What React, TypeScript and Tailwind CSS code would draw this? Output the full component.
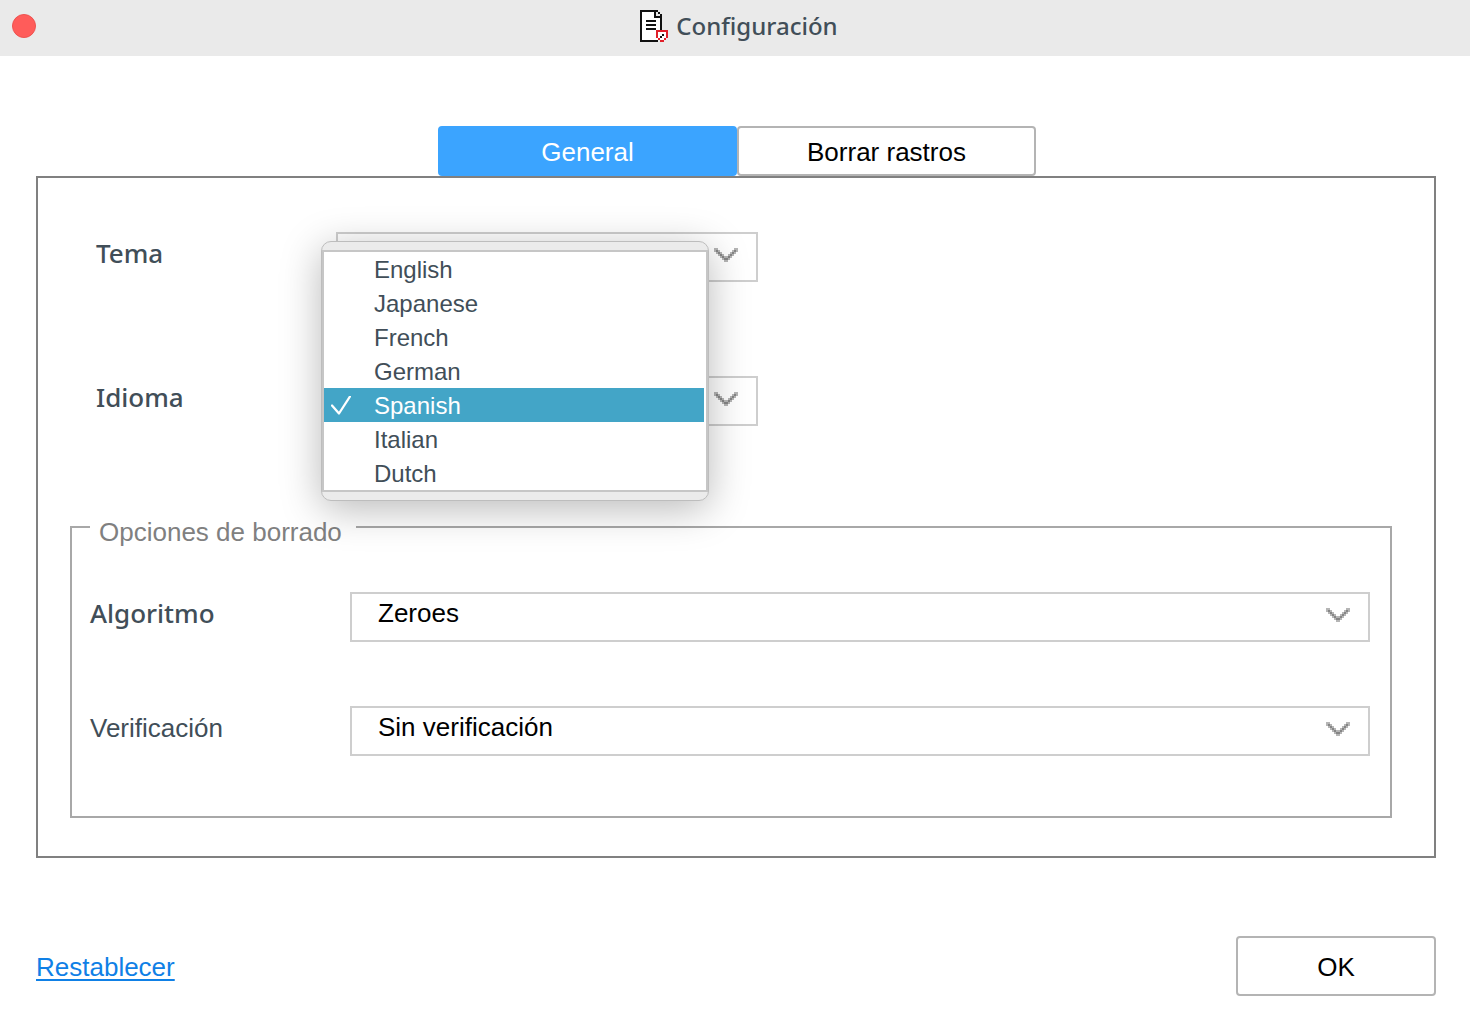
import React, { useState } from "react";
import clsx from "clsx";

const languages = [
  "English",
  "Japanese",
  "French",
  "German",
  "Spanish",
  "Italian",
  "Dutch",
];

const DocumentIcon = () => (
  <svg
    width="28"
    height="32"
    viewBox="0 0 14 16"
    shapeRendering="crispEdges"
    aria-hidden="true"
  >
    <path fill="#fff" d="M1 1h7v3h2v11H1z" />
    <path
      fill="#111"
      d="M0 0h9v1H0zM0 1h1v15H0zM1 15h8v1H1zM7 1h1v3H7zM9 1h1v1H9zM10 2h1v8h-1zM8 3h2v1H8zM3 5h5v1H3zM3 7h5v1H3zM3 9h5v1H3z"
    />
    <path fill="#fff" d="M9 11h4v3h-1v1h-2v-1H9z" />
    <path
      fill="#e0202a"
      d="M8 10h6v1H8zM8 11h1v3H8zM13 11h1v3h-1zM9 14h1v1H9zM12 14h1v1h-1zM10 15h2v1h-2z"
    />
    <path fill="#111" d="M11 12h1v1h-1zM10 13h1v1h-1z" />
  </svg>
);

const Chevron = () => (
  <svg
    className="pointer-events-none absolute right-5 top-4"
    width="24"
    height="14"
    viewBox="0 0 12 7"
    shapeRendering="crispEdges"
    aria-hidden="true"
  >
    <path
      fill="#b5b5b5"
      d="M0 0h2v1H0zM10 0h2v1h-2zM0 1h3v1H0zM9 1h3v1H9zM1 2h3v1H1zM8 2h3v1H8zM2 3h3v1H2zM7 3h3v1H7zM3 4h6v1H3zM4 5h4v1H4zM5 6h2v1H5z"
    />
    <path
      fill="#858585"
      d="M1 1h1v1H1zM10 1h1v1h-1zM2 2h1v1H2zM9 2h1v1H9zM3 3h1v1H3zM8 3h1v1H8zM4 4h1v1H4zM7 4h1v1H7zM5 5h2v1H5z"
    />
  </svg>
);

interface FieldProps {
  id: string;
  label: string;
  options: string[];
  value?: string;
  wide?: boolean;
  plainLabel?: boolean;
  children?: React.ReactNode;
}

const Field = ({
  id,
  label,
  options,
  value,
  wide,
  plainLabel,
  children,
}: FieldProps) => (
  <div className="flex items-center">
    <label
      htmlFor={id}
      className={clsx(
        "shrink-0 text-[26px] leading-8 text-[#414e58]",
        wide ? "w-[260px]" : "w-[240px]",
        plainLabel
          ? "pb-1.5 font-['Liberation_Sans',sans-serif]"
          : "pb-2 font-['Noto_Sans',sans-serif] font-medium"
      )}
    >
      {label}
    </label>
    <div className={clsx("relative", wide ? "grow" : "w-[422px]")}>
      <select
        id={id}
        defaultValue={value}
        className="block h-[50px] w-full appearance-none border-2 border-[#cecece] bg-white pb-2 pl-[26px] pr-14 text-[26px] text-black outline-none"
      >
        {options.map((option) => (
          <option key={option}>{option}</option>
        ))}
      </select>
      <Chevron />
      {children}
    </div>
  </div>
);

const LanguageMenu = () => {
  const [selected, setSelected] = useState("Spanish");

  return (
    <div className="absolute -left-[15px] -top-[135px] z-10 w-[388px] rounded-[10px] border border-[#bdbdbd] bg-[#ebebeb] py-2 shadow-[0_8px_40px_rgba(0,0,0,0.28)]">
      <ul
        role="listbox"
        aria-label="Idioma"
        className="border-2 border-[#c6c6c6] bg-white pr-0.5"
      >
        {languages.map((language) => (
          <li
            key={language}
            role="option"
            aria-selected={language === selected}
            onClick={() => setSelected(language)}
            className={clsx(
              "flex h-[34px] cursor-default items-center pl-[7px] pt-0.5 text-2xl",
              language === selected
                ? "bg-[#43a5c7] text-white"
                : "text-[#414e58]"
            )}
          >
            <span className="w-[43px]">
              {language === selected && (
                <svg
                  width="20"
                  height="20"
                  viewBox="0 0 20 20"
                  fill="none"
                  stroke="currentColor"
                  strokeWidth="2.3"
                  strokeLinecap="round"
                  strokeLinejoin="round"
                  aria-hidden="true"
                >
                  <path d="M1 9.5l7 8L19 0.5" />
                </svg>
              )}
            </span>
            {language}
          </li>
        ))}
      </ul>
    </div>
  );
};

const App = () => {
  const [tab, setTab] = useState("General");

  return (
    <div className="min-h-screen bg-white font-['Liberation_Sans',Arial,sans-serif] text-[26px] text-black">
      <header className="flex h-14 items-center bg-[#eaeaea] pb-1 pl-3 pr-7">
        <button
          type="button"
          aria-label="Cerrar"
          className="size-6 rounded-full border border-[#ee5350] bg-[#ff5c5a]"
        />
        <div className="flex grow items-center justify-center gap-2">
          <DocumentIcon />
          <h1 className="font-['Noto_Sans',sans-serif] text-2xl font-medium">
            <span className="text-[#414e58]">Configuración</span>
          </h1>
        </div>
      </header>

      <main className="pb-9 pl-9 pr-[34px] pt-[70px]">
        <div role="tablist" className="flex justify-center pl-0.5">
          {["General", "Borrar rastros"].map((name) => (
            <button
              key={name}
              type="button"
              role="tab"
              aria-selected={tab === name}
              onClick={() => setTab(name)}
              className={clsx(
                "h-[50px] w-[299px] rounded-[4px] border-2 pt-0.5",
                tab === name
                  ? "border-[#3ba4ff] bg-[#3ba4ff] text-white"
                  : "border-[#b4b4b4] bg-white"
              )}
            >
              {name}
            </button>
          ))}
        </div>

        <section className="border-2 border-[#808080] pb-[38px] pl-8 pr-[42px] pt-[54px]">
          <div className="flex flex-col gap-[94px] pl-[26px]">
            <Field id="tema" label="Tema" options={["Blanco", "Oscuro"]} />
            <Field
              id="idioma"
              label="Idioma"
              options={languages}
              value="Spanish"
            >
              <LanguageMenu />
            </Field>
          </div>

          <fieldset className="mt-[83px] border-2 border-[#a8a8a8] pb-[60px] pl-[18px] pr-5">
            <legend className="pl-[9px] pr-3.5 pt-2.5 leading-[26px] text-[#808080]">
              Opciones de borrado
            </legend>
            <div className="flex flex-col gap-16 pt-[47px]">
              <Field
                id="algoritmo"
                label="Algoritmo"
                options={["Zeroes"]}
                wide
              />
              <Field
                id="verificacion"
                label="Verificación"
                options={["Sin verificación"]}
                wide
                plainLabel
              />
            </div>
          </fieldset>
        </section>

        <footer className="mt-[78px] flex items-center justify-between">
          <a
            href="#restablecer"
            className="pt-0.5 text-[#0f80e6] underline decoration-2 underline-offset-3"
          >
            Restablecer
          </a>
          <button
            type="button"
            className="h-[60px] w-[200px] rounded-[4px] border-2 border-[#b4b4b4] bg-white pt-0.5"
          >
            OK
          </button>
        </footer>
      </main>
    </div>
  );
};

export default App;
